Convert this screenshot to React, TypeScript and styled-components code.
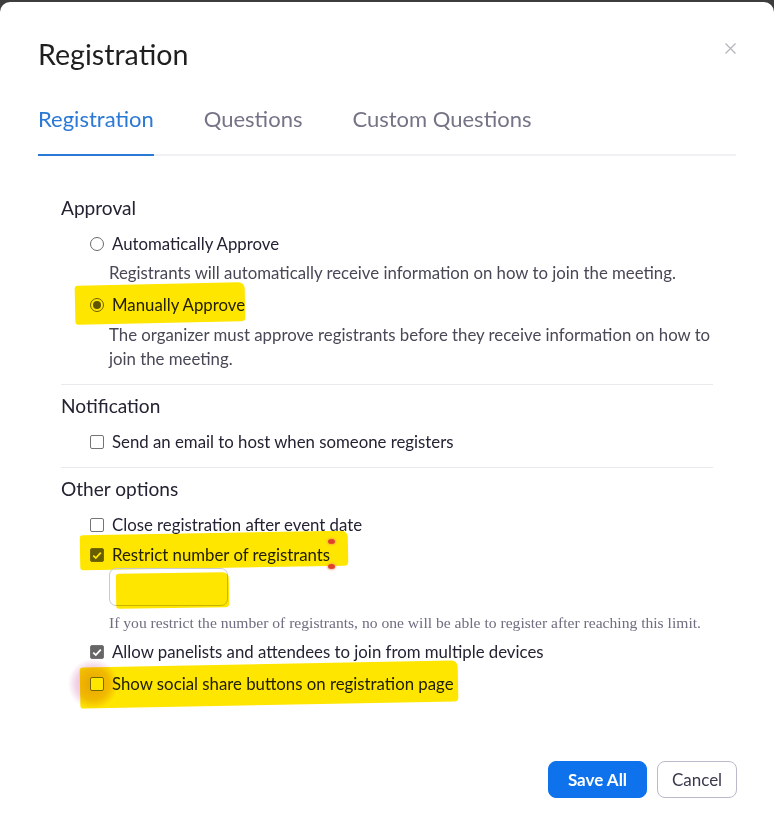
import React from "react";
import styled, { createGlobalStyle, css } from "styled-components";

const Global = createGlobalStyle`
  html, body { margin: 0; padding: 0; background: #3d3d3d; }
  body { font-family: Lato, "Open Sans", Arial, sans-serif; }
  * { box-sizing: border-box; }
`;

const Modal = styled.div`
  margin-top: 2px;
  min-height: 823px;
  background: #fff;
  border-radius: 10px 10px 0 0;
  display: flex;
  flex-direction: column;
  overflow: hidden;
`;

const Header = styled.div`
  display: flex;
  justify-content: space-between;
  align-items: flex-start;
  padding: 35px 38px 0 38px;
`;

const Title = styled.h1`
  margin: 0;
  font-size: 28.6px;
  line-height: 34px;
  font-weight: 400;
  color: #1f1f1f;
`;

const Close = styled.button`
  margin-top: 6px;
  padding: 0;
  border: 0;
  background: none;
  width: 11px;
  height: 11px;
  display: flex;
`;

const TabList = styled.div`
  margin: 34px 38px 0 38px;
  display: flex;
  gap: 50px;
  border-bottom: 2px solid #f1f1f4;
`;

const Tab = styled.div<{ $active?: boolean }>`
  font-size: 22px;
  line-height: 28px;
  padding-bottom: 21px;
  margin-bottom: -2px;
  border-bottom: 2px solid ${(p) => (p.$active ? "#2a79d6" : "transparent")};
  color: ${(p) => (p.$active ? "#2a79d6" : "#747487")};
`;

const Body = styled.div`
  padding: 0 61px;
  display: flex;
  flex-direction: column;
`;

const SectionTitle = styled.div<{ $mt: number }>`
  margin-top: ${(p) => p.$mt}px;
  font-size: 19.1px;
  line-height: 24px;
  color: #232333;
`;

const OptionRow = styled.div<{ $mt: number }>`
  position: relative;
  margin-top: ${(p) => p.$mt}px;
  margin-left: 29px;
  display: flex;
  align-items: center;
  gap: 8px;
  font-size: 16.8px;
  line-height: 24px;
  color: #232333;
`;

const Label = styled.span`
  position: relative;
`;

const Desc = styled.div<{ $mt: number }>`
  margin-top: ${(p) => p.$mt}px;
  margin-left: 48px;
  font-size: 16.8px;
  line-height: 24px;
  color: #484856;
`;

const Divider = styled.div`
  margin-top: 13px;
  height: 1px;
  background: #e9e9ee;
`;

const Radio = styled.span<{ $checked?: boolean }>`
  width: 14px;
  height: 14px;
  border-radius: 50%;
  border: 1px solid #6a6a6a;
  display: flex;
  align-items: center;
  justify-content: center;
  flex: none;
  position: relative;
  ${(p) =>
    p.$checked &&
    css`
      &::after {
        content: "";
        width: 8px;
        height: 8px;
        border-radius: 50%;
        background: #5f5f5f;
      }
    `}
`;

const Box = styled.span<{ $checked?: boolean }>`
  width: 14px;
  height: 14px;
  border-radius: 2px;
  border: 1px solid #747474;
  background: ${(p) => (p.$checked ? "#666" : "#fff")};
  display: flex;
  align-items: center;
  justify-content: center;
  flex: none;
  position: relative;
`;

const NumberInput = styled.div`
  position: relative;
  margin-top: 1px;
  margin-left: 48px;
  width: 119px;
  height: 38px;
  border: 1px solid #c9c9d1;
  border-radius: 7px;
`;

const Helper = styled.div`
  margin-top: 8px;
  margin-left: 48px;
  font-family: "Liberation Serif", "Times New Roman", serif;
  font-size: 15.6px;
  line-height: 18px;
  color: #6e6e80;
  white-space: nowrap;
`;

const Marker = styled.span<{ $l: number; $t: number; $w: number; $h: number; $r: number }>`
  position: absolute;
  left: ${(p) => p.$l}px;
  top: ${(p) => p.$t}px;
  width: ${(p) => p.$w}px;
  height: ${(p) => p.$h}px;
  background: #ffe600;
  mix-blend-mode: multiply;
  transform: rotate(${(p) => p.$r}deg);
  border-radius: 3px 6px 4px 3px;
  pointer-events: none;
`;

const Glow = styled.span`
  position: absolute;
  left: -22px;
  top: -14px;
  width: 50px;
  height: 52px;
  border-radius: 50%;
  background: radial-gradient(circle, rgba(214, 120, 180, 0.55) 0%, rgba(214, 120, 180, 0.35) 45%, rgba(214, 120, 180, 0) 70%);
  mix-blend-mode: multiply;
  pointer-events: none;
`;

const Dot = styled.span<{ $t: number }>`
  position: absolute;
  left: 238px;
  top: ${(p) => p.$t}px;
  width: 7px;
  height: 5px;
  border-radius: 50%;
  background: #e0412a;
  box-shadow: 0 0 2px 1px rgba(240, 140, 100, 0.6);
`;

const Footer = styled.div`
  margin-top: 65px;
  padding: 0 37px 0 0;
  display: flex;
  justify-content: flex-end;
  gap: 10px;
`;

const Button = styled.button<{ $primary?: boolean }>`
  height: 37px;
  width: ${(p) => (p.$primary ? 99 : 80)}px;
  padding: 0;
  border-radius: 8px;
  font-family: Lato, Arial, sans-serif;
  font-size: 17px;
  font-weight: ${(p) => (p.$primary ? 700 : 400)};
  border: 1px solid ${(p) => (p.$primary ? "#0e72ed" : "#babacc")};
  background: ${(p) => (p.$primary ? "#0e72ed" : "#fff")};
  color: ${(p) => (p.$primary ? "#fff" : "#39394d")};
`;

const Check = () => (
  <svg width="10" height="9" viewBox="0 0 10 9">
    <path d="M1.2 4.6 L3.8 7 L8.8 1.6" fill="none" stroke="#fff" strokeWidth="1.8" />
  </svg>
);

export default function App() {
  return (
    <>
      <Global />
      <Modal>
        <Header>
          <Title>Registration</Title>
          <Close aria-label="Close">
            <svg width="11" height="11" viewBox="0 0 11 11">
              <path d="M0.5 0.5 L10.5 10.5 M10.5 0.5 L0.5 10.5" stroke="#b4b4bc" strokeWidth="1.2" />
            </svg>
          </Close>
        </Header>
        <TabList>
          <Tab $active>Registration</Tab>
          <Tab>Questions</Tab>
          <Tab>Custom Questions</Tab>
        </TabList>
        <Body>
          <SectionTitle $mt={40}>Approval</SectionTitle>
          <OptionRow $mt={12}>
            <Radio />
            <Label>Automatically Approve</Label>
          </OptionRow>
          <Desc $mt={5}>Registrants will automatically receive information on how to join the meeting.</Desc>
          <OptionRow $mt={8}>
            <Radio $checked />
            <Label>Manually Approve</Label>
            <Marker $l={-15} $t={-9} $w={170} $h={39} $r={-1.2} />
          </OptionRow>
          <Desc $mt={6}>
            The organizer must approve registrants before they receive information on how to join the meeting.
          </Desc>
          <Divider />
          <SectionTitle $mt={9}>Notification</SectionTitle>
          <OptionRow $mt={12}>
            <Box />
            <Label>Send an email to host when someone registers</Label>
          </OptionRow>
          <Divider />
          <SectionTitle $mt={9}>Other options</SectionTitle>
          <OptionRow $mt={12}>
            <Box />
            <Label>Close registration after event date</Label>
          </OptionRow>
          <OptionRow $mt={6}>
            <Box $checked>
              <Check />
            </Box>
            <Label>Restrict number of registrants</Label>
            <Marker $l={-10} $t={-10} $w={268} $h={35} $r={-1} />
            <Dot $t={-4} />
            <Dot $t={21} />
          </OptionRow>
          <NumberInput>
            <Marker $l={6} $t={4} $w={113} $h={35} $r={-0.8} />
          </NumberInput>
          <Helper>
            If you restrict the number of registrants, no one will be able to register after reaching this limit.
          </Helper>
          <OptionRow $mt={8}>
            <Box $checked>
              <Check />
            </Box>
            <Label>Allow panelists and attendees to join from multiple devices</Label>
          </OptionRow>
          <OptionRow $mt={8}>
            <Glow />
            <Box />
            <Label>Show social share buttons on registration page</Label>
            <Marker $l={-10} $t={-8} $w={378} $h={41} $r={-1.1} />
          </OptionRow>
        </Body>
        <Footer>
          <Button $primary>Save All</Button>
          <Button>Cancel</Button>
        </Footer>
      </Modal>
    </>
  );
}
